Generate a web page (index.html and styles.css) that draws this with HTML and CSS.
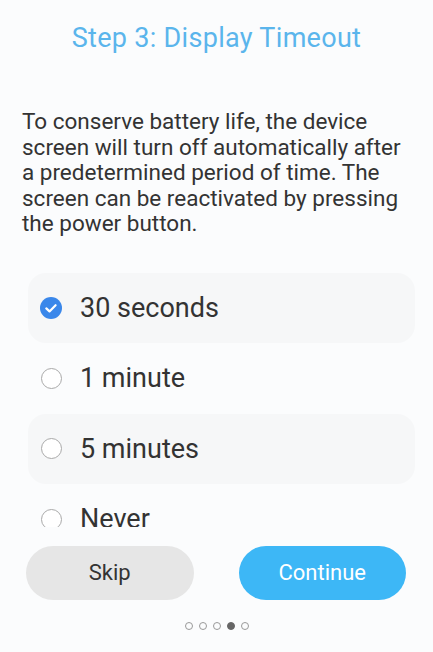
FILE: index.html
```html
<!DOCTYPE html>
<html lang="en">
<head>
<meta charset="utf-8">
<title>Display Timeout</title>
<link rel="stylesheet" href="styles.css">
</head>
<body>
<main class="screen">
  <h1 class="title">Step 3: Display Timeout</h1>
  <p class="desc">To conserve battery life, the device screen will turn off automatically after a predetermined period of time. The screen can be reactivated by pressing the power button.</p>
  <div class="options">
    <div class="option card">
      <span class="check">
        <svg viewBox="0 0 22 22" width="22" height="22"><circle cx="11" cy="11" r="11" fill="#3a87ea"/><path d="M6.3 11.4 L9.5 14.4 L15.6 8.2" fill="none" stroke="#fff" stroke-width="2.2" stroke-linecap="round" stroke-linejoin="round"/></svg>
      </span>
      <span class="label">30 seconds</span>
    </div>
    <div class="option">
      <span class="radio"></span>
      <span class="label">1 minute</span>
    </div>
    <div class="option card">
      <span class="radio"></span>
      <span class="label">5 minutes</span>
    </div>
    <div class="option">
      <span class="radio"></span>
      <span class="label">Never</span>
    </div>
  </div>
  <div class="actions">
    <button class="btn skip">Skip</button>
    <button class="btn cont">Continue</button>
  </div>
  <div class="dots">
    <span class="dot"></span><span class="dot"></span><span class="dot"></span><span class="dot on"></span><span class="dot"></span>
  </div>
</main>
</body>
</html>
```
FILE: styles.css
```css
html, body {
  margin: 0;
  padding: 0;
  height: 100%;
}
body {
  background: #fbfcfd;
  font-family: Roboto, "Noto Sans", sans-serif;
  color: #333;
}
.screen {
  height: 652px;
  display: flex;
  flex-direction: column;
  overflow: hidden;
}
.title {
  margin: 20px 0 0;
  height: 36px;
  line-height: 36px;
  font-size: 27px;
  font-weight: 400;
  letter-spacing: 0.3px;
  text-align: center;
  color: #5ab5ec;
}
.desc {
  margin: 53px 20px 0 22px;
  font-size: 22.5px;
  line-height: 25.5px;
  color: #333;
}
.options {
  margin-top: 36px;
  height: 254px;
  overflow: hidden;
  display: flex;
  flex-direction: column;
  padding: 0 18px 0 28px;
}
.option {
  flex: 0 0 70.5px;
  display: flex;
  align-items: center;
  gap: 18px;
  padding-left: 12px;
  border-radius: 18px;
}
.option.card {
  background: #f6f7f8;
}
.check {
  width: 22px;
  height: 22px;
  display: flex;
}
.radio {
  box-sizing: border-box;
  width: 21px;
  height: 21px;
  margin: 0 0.5px;
  border: 1.5px solid #a9a9a9;
  border-radius: 50%;
  background: #fff;
}
.label {
  font-size: 27px;
  color: #333;
}
.actions {
  margin-top: 19px;
  display: flex;
  gap: 45px;
  padding: 0 27px 0 26px;
}
.btn {
  flex: 1;
  height: 54px;
  border: none;
  border-radius: 27px;
  font-family: Roboto, "Noto Sans", sans-serif;
  font-size: 22px;
}
.skip {
  background: #e6e6e6;
  color: #333;
}
.cont {
  background: #3db7f6;
  color: #fff;
}
.dots {
  margin-top: 22px;
  display: flex;
  justify-content: center;
  gap: 6px;
}
.dot {
  box-sizing: border-box;
  width: 8px;
  height: 8px;
  border-radius: 50%;
  border: 1.3px solid #999;
}
.dot.on {
  background: #666;
  border-color: #666;
}
```
